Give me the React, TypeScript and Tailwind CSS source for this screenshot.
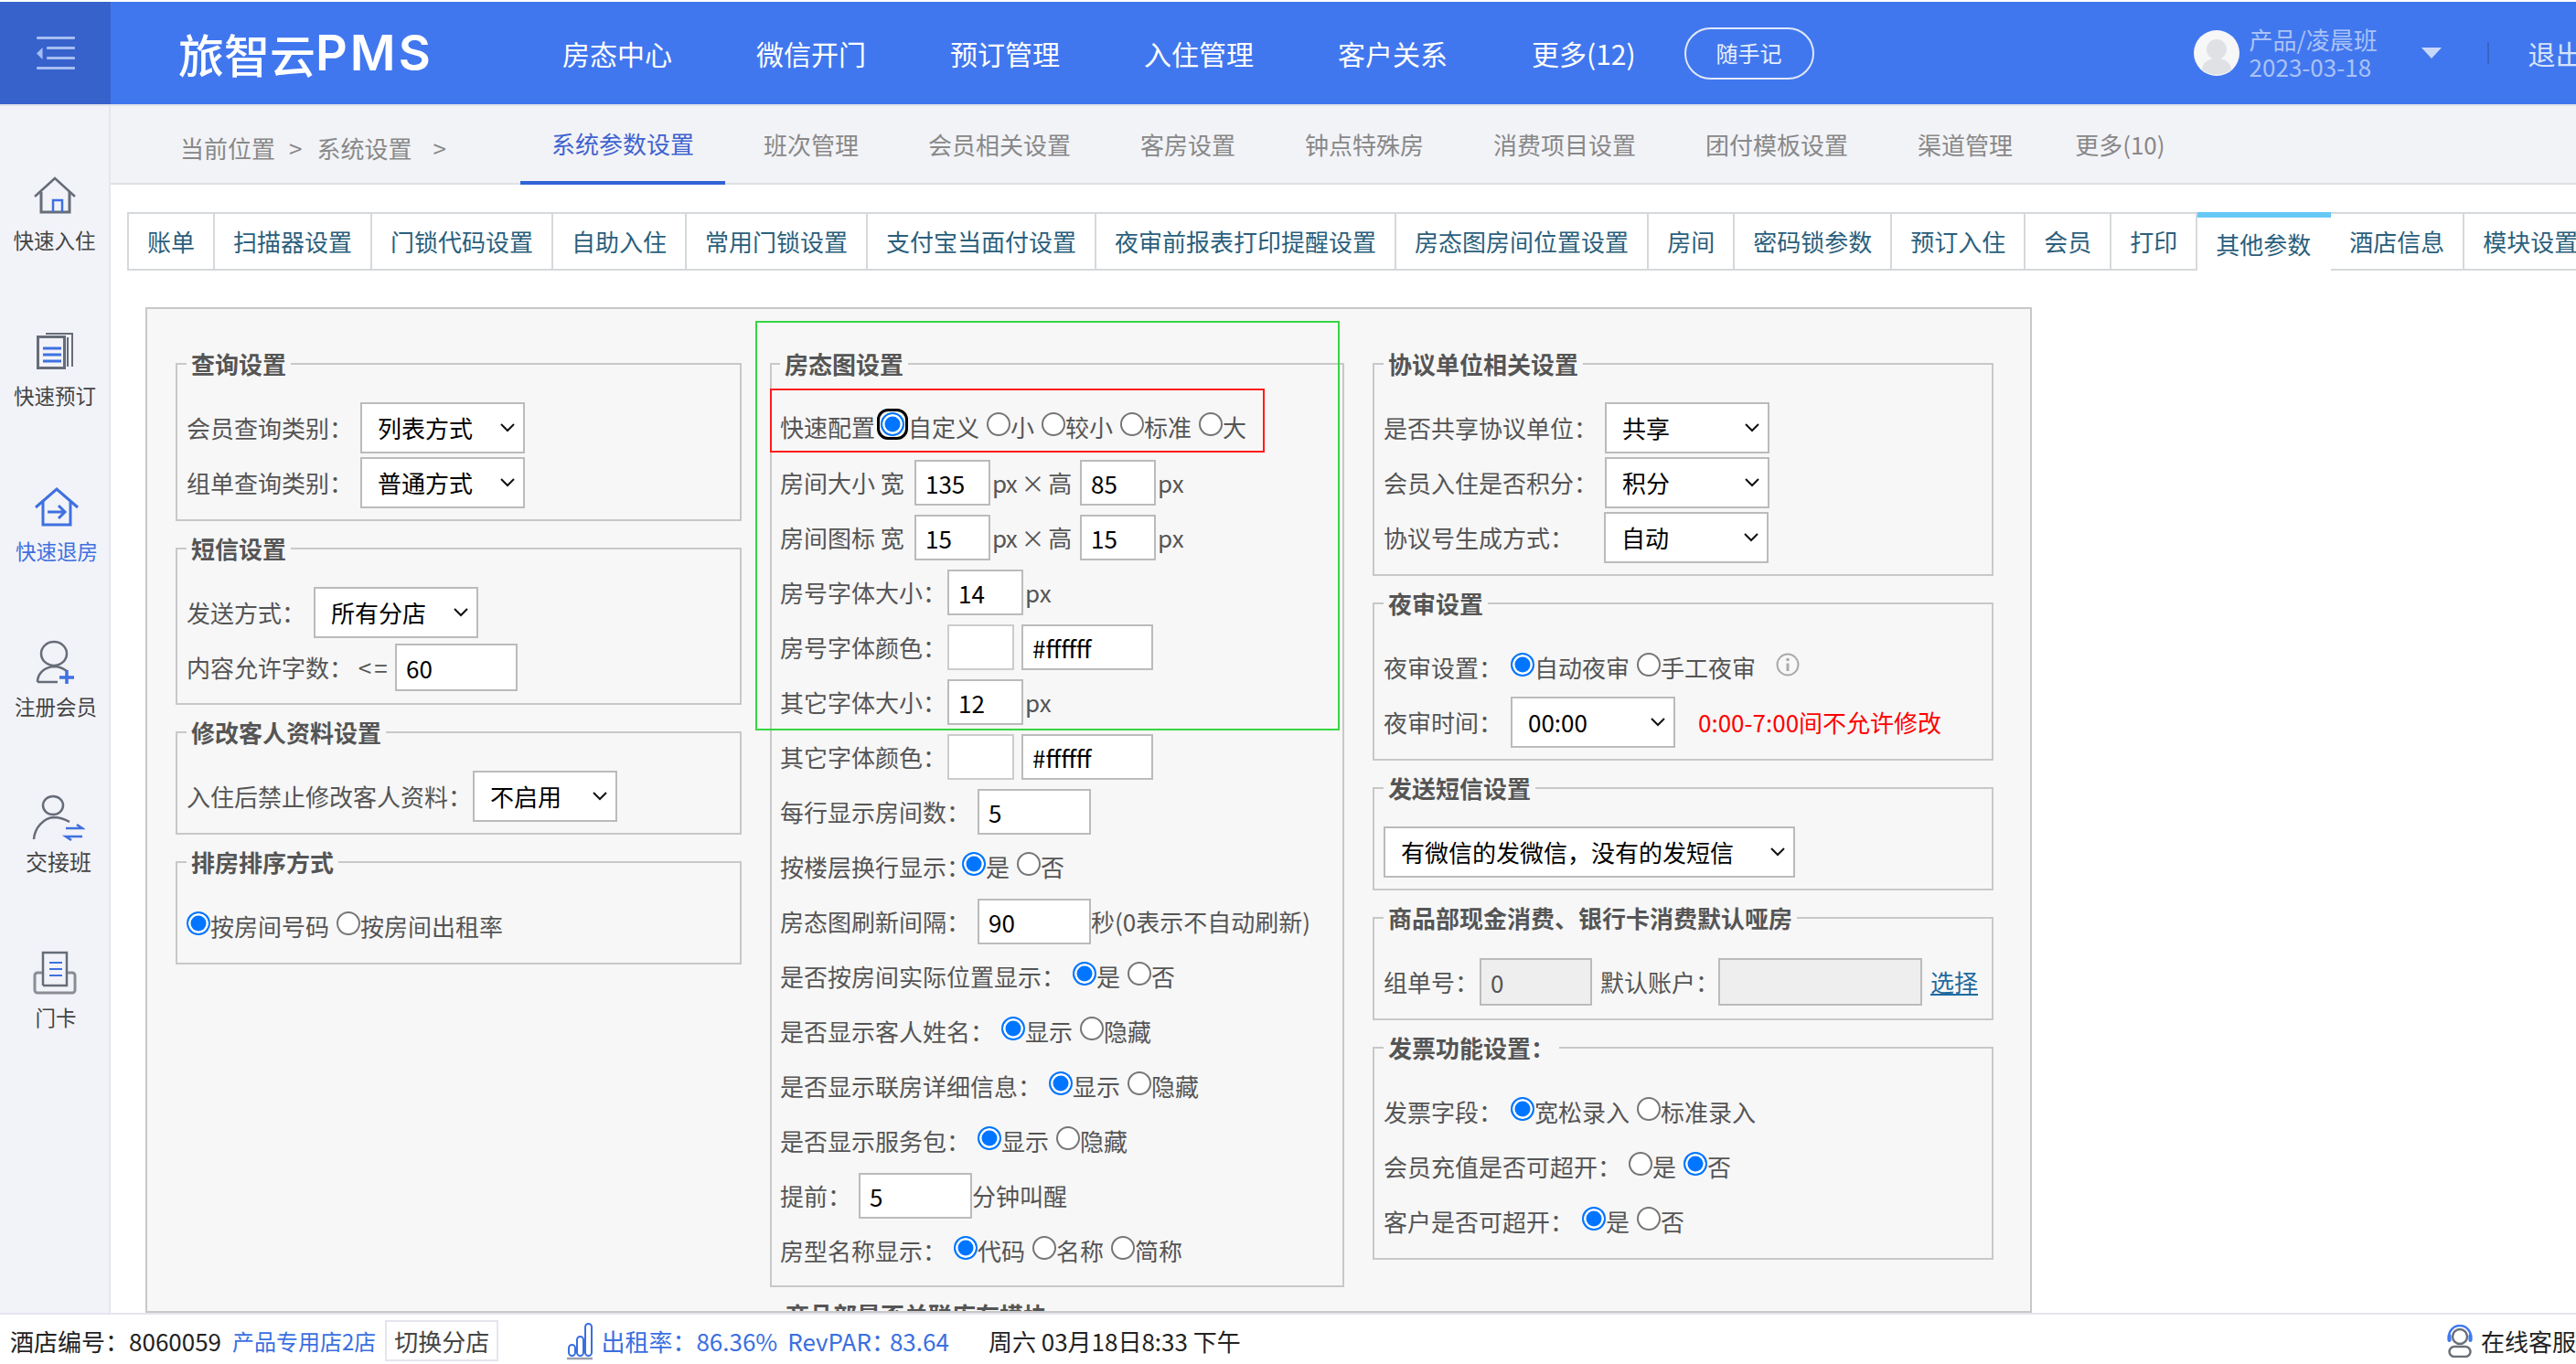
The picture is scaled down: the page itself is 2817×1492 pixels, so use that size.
import React from 'react';

const Label = ({ w, children }: { w: string; children: React.ReactNode }) => (
  <span className={`shrink-0 whitespace-nowrap text-[#555] ${w}`}>{children}</span>
);

const Chevron = () => (
  <svg className="absolute right-[11px] top-1/2 -translate-y-1/2" width="16" height="10" viewBox="0 0 16 10" fill="none">
    <path d="M1 1l7 7 7-7" stroke="#111" strokeWidth="2" />
  </svg>
);

const Sel = ({ value, w }: { value: string; w: string }) => (
  <div className={`relative h-[56px] shrink-0 ${w}`}>
    <select className="w-full h-full appearance-none border-2 border-[#bbb] bg-white text-black pl-[17px] rounded-none">
      <option>{value}</option>
    </select>
    <Chevron />
  </div>
);

const Inp = ({ value, w, h = 'h-[50px]' }: { value: string; w: string; h?: string }) => (
  <input readOnly defaultValue={value} className={`shrink-0 border-2 border-[#bbb] bg-white text-black pl-[10px] ${w} ${h}`} />
);

const radioCls = 'appearance-none w-[26px] h-[26px] shrink-0 rounded-full border-2 border-[#767676] bg-white checked:border-[#0075ff] checked:bg-[#0075ff] checked:shadow-[inset_0_0_0_2.5px_white]';

const Radio = ({ name, label, checked }: { name: string; label: string; checked?: boolean }) => (
  <label className="flex items-center shrink-0 whitespace-nowrap text-[#555]">
    <input type="radio" name={name} defaultChecked={checked} className={`${radioCls} -mt-[6px]`} />
    <span>{label}</span>
  </label>
);

const Field = ({ title, pb = 'pb-[12px]', pt = 'pt-[24px]', pl = 'pl-[10px]', children }: { title: string; pb?: string; pt?: string; pl?: string; children?: React.ReactNode }) => (
  <fieldset className={`border-2 border-[#c8c8c8] mb-[12px] ${pb} ${pl}`}>
    <legend className="px-[5px] font-bold text-[#555] leading-[36px] whitespace-nowrap">{title}</legend>
    <div className={pt}>{children}</div>
  </fieldset>
);

const Row = ({ h = 'h-[50px]', mb = 'mb-[10px]', children }: { h?: string; mb?: string; children: React.ReactNode }) => (
  <div className={`flex items-center ${h} ${mb}`}>{children}</div>
);

const RadioRow = ({ h = 'h-[50px]', mb = 'mb-[10px]', children }: { h?: string; mb?: string; children: React.ReactNode }) => (
  <div className={`flex items-center gap-x-[8px] ${h} ${mb}`}>{children}</div>
);

const topTabs = ['会员相关设置', '客房设置', '钟点特殊房', '消费项目设置', '团付模板设置', '渠道管理'];
const subTabs = ['账单', '扫描器设置', '门锁代码设置', '自助入住', '常用门锁设置', '支付宝当面付设置', '夜审前报表打印提醒设置', '房态图房间位置设置', '房间', '密码锁参数', '预订入住', '会员', '打印', '其他参数', '酒店信息', '模块设置'];
const navs = ['房态中心', '微信开门', '预订管理', '入住管理', '客户关系', '更多(12)'];

const HomeIcon = () => (
  <svg width="48" height="42" viewBox="0 0 48 42" fill="none">
    <path d="M2 22L24 2l22 20" stroke="#666c78" strokeWidth="2.5" />
    <path d="M9 17v22h31V17" stroke="#666c78" strokeWidth="3" />
    <path d="M22 39V26h10v13" stroke="#3f70e0" strokeWidth="2.5" />
  </svg>
);
const BookIcon = () => (
  <svg width="42" height="42" viewBox="0 0 42 42" fill="none">
    <rect x="2.5" y="5.5" width="29" height="34" stroke="#666c78" strokeWidth="3" />
    <path d="M11 2h29v36M35 6v32" stroke="#666c78" strokeWidth="2" />
    <path d="M8 18h20M8 25h20M8 32h20" stroke="#3f70e0" strokeWidth="3" />
  </svg>
);
const OutIcon = () => (
  <svg width="50" height="44" viewBox="0 0 50 44" fill="none">
    <path d="M2 23L25 3l23 20" stroke="#3f70e0" strokeWidth="3" />
    <path d="M10 17v25h30V17" stroke="#3f70e0" strokeWidth="3" />
    <path d="M15 28h19M27 21l7 7-7 7" stroke="#3f70e0" strokeWidth="3" />
  </svg>
);
const AddUserIcon = () => (
  <svg width="44" height="48" viewBox="0 0 44 48" fill="none">
    <ellipse cx="20" cy="15" rx="14" ry="13" stroke="#666c78" strokeWidth="2.5" />
    <path d="M2 46c0-8 6-16 18-17 6 0 10 2 14 5M2 46h22" stroke="#666c78" strokeWidth="2.5" />
    <path d="M26 41h16M34 33v16" stroke="#3f70e0" strokeWidth="3.5" />
  </svg>
);
const SwapIcon = () => (
  <svg width="58" height="52" viewBox="0 0 58 52" fill="none">
    <ellipse cx="23" cy="13" rx="11" ry="10" stroke="#666c78" strokeWidth="2.5" />
    <path d="M2 50c1-14 12-23 21-24 7 0 13 2 18 5" stroke="#666c78" strokeWidth="2.5" />
    <path d="M37 38h18l-6-4M55 47H37l6 4" stroke="#3f70e0" strokeWidth="2.5" />
  </svg>
);
const CardIcon = () => (
  <svg width="50" height="48" viewBox="0 0 50 48" fill="none">
    <path d="M11 38V2h26v36H11" stroke="#666c78" strokeWidth="2.5" />
    <path d="M18 13h14M18 20h14M18 27h14" stroke="#3f70e0" strokeWidth="2" />
    <path d="M10 24H5a3 3 0 00-3 3v16a3 3 0 003 3h38a3 3 0 003-3V27a3 3 0 00-3-3h-5" stroke="#8a8d94" strokeWidth="3" />
  </svg>
);

const sideItems = [
  { label: '快速入住', icon: <HomeIcon />, cls: 'pl-[0px] text-[22.5px] text-[#444]' },
  { label: '快速预订', icon: <BookIcon />, cls: 'pl-[1px] text-[22.5px] text-[#444]' },
  { label: '快速退房', icon: <OutIcon />, cls: 'pl-[5px] text-[22.5px] text-[#3f70e0]' },
  { label: '注册会员', icon: <AddUserIcon />, cls: 'pl-[3px] text-[22.5px] text-[#444]' },
  { label: '交接班', icon: <SwapIcon />, cls: 'pl-[9px] text-[24px] text-[#444]' },
  { label: '门卡', icon: <CardIcon />, cls: 'pl-[3px] text-[22.5px] text-[#444]' },
];

export default function App() {
  return (
    <div lang="zh-CN" className="w-[2817px] h-[1492px] overflow-hidden flex flex-col bg-white pt-[2px] text-[26px] leading-[36px] font-['Noto_Sans_CJK_SC','Noto_Sans',sans-serif]">
      {/* header */}
      <div className="h-[114px] shrink-0 border-b-2 border-[#e3e4e9] flex bg-[#4177ee] text-white">
        <div className="w-[121px] shrink-0 bg-[#3762cc] flex items-center justify-center">
          <svg width="42" height="36" viewBox="0 0 42 36" fill="#a6bdf2">
            <rect width="42" height="3" rx="1" />
            <rect x="11" y="11" width="31" height="3" rx="1" />
            <rect x="11" y="22" width="31" height="3" rx="1" />
            <rect y="33" width="42" height="3" rx="1" />
            <path d="M6.5 12v13L0 18.500z" />
          </svg>
        </div>
        <div className="w-[448px] pl-[74px] shrink-0 flex items-center text-[50px] font-medium whitespace-nowrap">
          <span>旅智云</span>
          <span className="font-['Inter',sans-serif] font-semibold text-[54px] tracking-[3px]">PMS</span>
        </div>
        {navs.map((n) => (
          <div key={n} className="px-[46px] flex items-center text-[30px] whitespace-nowrap shrink-0">{n}</div>
        ))}
        <div className="self-center shrink-0 ml-[7px] w-[142px] h-[57px] rounded-full border-2 border-[#dfe8fb] flex items-center justify-center text-[24px] text-[#e8effd]">随手记</div>
        <svg className="self-center shrink-0 ml-[415px]" width="50" height="50" viewBox="0 0 50 50">
          <circle cx="25" cy="25" r="25" fill="#f7f7f8" />
          <circle cx="25" cy="21" r="11" fill="#dfe1e5" />
          <path d="M9 43c1-9 8-12 16-12s15 3 16 12a25 25 0 01-32 0z" fill="#dfe1e5" />
        </svg>
        <div className="self-center shrink-0 ml-[11px] w-[188px] text-[#abc2f6] leading-[30px] -mt-[1px] whitespace-nowrap">
          <div>产品/凌晨班</div>
          <div>2023-03-18</div>
        </div>
        <svg className="self-center shrink-0" width="22" height="12" viewBox="0 0 22 12"><path d="M0 0h22L11 12z" fill="#c9d8fa" /></svg>
        <div className="self-center shrink-0 ml-[50px] w-[2px] h-[24px] bg-[#3a62c4]" />
        <div className="self-center shrink-0 ml-[43px] text-[30px] text-[#d8e3fb] whitespace-nowrap">退出</div>
      </div>

      <div className="flex-1 min-h-0 flex overflow-hidden">
        {/* sidebar */}
        <div className="w-[121px] shrink-0 bg-[#f2f3f8] border-r-2 border-[#e6e7ee] pt-[66px]">
          {sideItems.map((s) => (
            <div key={s.label} className={`h-[170px] flex flex-col items-center ${s.cls}`}>
              <div className="h-[64px] flex items-center justify-center">{s.icon}</div>
              <div className="leading-[32px] whitespace-nowrap">{s.label}</div>
            </div>
          ))}
        </div>

        <div className="flex-1 min-w-0 flex flex-col">
          {/* breadcrumb + top tabs */}
          <div className="h-[86px] shrink-0 bg-[#f2f3f7] border-b-2 border-[#e0e1e4] flex items-start whitespace-nowrap">
            <div className="w-[444px] shrink-0 h-[84px] pl-[76px] pt-[8px] flex items-center text-[#888]">
              <span>当前位置</span>
              <span className="ml-[15px]">&gt;</span>
              <span className="ml-[16px]">系统设置</span>
              <span className="ml-[23px]">&gt;</span>
            </div>
            <div className="h-[86px] px-[4px] shrink-0">
              <div className="h-full px-[34px] border-b-4 border-[#3163d6] flex items-center text-[#3f63cf]">系统参数设置</div>
            </div>
            <div className="h-[84px] px-[38px] shrink-0 flex items-center text-[#888]">班次管理</div>
            {topTabs.map((t) => (
              <div key={t} className="h-[84px] px-[38px] shrink-0 flex items-center text-[#888]">{t}</div>
            ))}
            <div className="h-[84px] -ml-[8px] px-[38px] shrink-0 flex items-center text-[#888]">更多(10)</div>
          </div>

          {/* sub tabs */}
          <div className="shrink-0 pt-[30px] pl-[18px] flex whitespace-nowrap text-[#2b5f7c]">
            <div className="flex shrink-0 border-l-2 border-[#d5d9dc]">
              {subTabs.map((t) =>
                t === '其他参数' ? (
                  <div key={t} className="h-[64px] shrink-0 px-[20px] pr-[22px] border-t-[6px] border-[#66c8f5] bg-white flex items-center">{t}</div>
                ) : (
                  <div key={t} className="h-[64px] shrink-0 px-[20px] border-t-2 border-b-2 border-r-2 border-[#d5d9dc] flex items-center">{t}</div>
                )
              )}
            </div>
          </div>

          {/* settings panel */}
          <div className="relative flex-1 min-h-0 ml-[38px] mt-[40px] w-[2063px] border-2 border-[#c8c8c8] bg-[#f7f7f7] overflow-hidden pt-[42px] pl-[31px] flex items-start">
            <div className="w-[619px] shrink-0">
              <Field title="查询设置">
                <Row h="h-[56px]" mb="mb-[4px]"><Label w="w-[190px]">会员查询类别：</Label><Sel value="列表方式" w="w-[180px]" /></Row>
                <Row h="h-[56px]" mb="mb-0"><Label w="w-[190px]">组单查询类别：</Label><Sel value="普通方式" w="w-[180px]" /></Row>
              </Field>
              <Field title="短信设置" pb="pb-[13px]">
                <Row h="h-[56px]" mb="mb-[6px]"><Label w="w-[139px]">发送方式：</Label><Sel value="所有分店" w="w-[180px]" /></Row>
                <Row h="h-[52px]" mb="mb-0"><Label w="w-[228px]">内容允许字数： <span className="tracking-[3px]">&lt;=</span></Label><Inp value="60" w="w-[134px]" h="h-[52px]" /></Row>
              </Field>
              <Field title="修改客人资料设置">
                <Row h="h-[56px]" mb="mb-0"><Label w="w-[313px]">入住后禁止修改客人资料：</Label><Sel value="不启用" w="w-[158px]" /></Row>
              </Field>
              <Field title="排房排序方式">
                <RadioRow h="h-[56px]" mb="mb-0">
                  <Radio name="sort" label="按房间号码" checked />
                  <Radio name="sort" label="按房间出租率" />
                </RadioRow>
              </Field>
            </div>

            <div className="w-[628px] shrink-0 ml-[31px]">
              <Field title="房态图设置" pt="pt-[9px]" pb="pb-[13px]" pl="pl-[9px]">
                <div className="-ml-[11px] mb-[8px] w-[541px] h-[70px] border-2 border-[#ff1a1a] pl-[9px] pt-[14px] flex items-center gap-x-[8px] whitespace-nowrap">
                  <div className="flex items-center">
                    <span className="text-[#555] mr-[2px]">快速配置</span>
                    <span className="w-[34px] h-[34px] -mt-[6px] shrink-0 rounded-[12px] border-[3px] border-black flex items-center justify-center">
                      <input type="radio" name="quick" defaultChecked className={radioCls} />
                    </span>
                    <span className="text-[#555]">自定义</span>
                  </div>
                  <Radio name="quick" label="小" />
                  <Radio name="quick" label="较小" />
                  <Radio name="quick" label="标准" />
                  <Radio name="quick" label="大" />
                </div>
                <Row><Label w="w-[147px]">房间大小 宽</Label><Inp value="135" w="w-[83px]" /><span className="ml-[2px] w-[96px] shrink-0 tracking-[-1px] text-[#555] whitespace-nowrap">px × 高</span><Inp value="85" w="w-[83px]" /><span className="ml-[2px] text-[#555]">px</span></Row>
                <Row><Label w="w-[147px]">房间图标 宽</Label><Inp value="15" w="w-[83px]" /><span className="ml-[2px] w-[96px] shrink-0 tracking-[-1px] text-[#555] whitespace-nowrap">px × 高</span><Inp value="15" w="w-[83px]" /><span className="ml-[2px] text-[#555]">px</span></Row>
                <Row><Label w="w-[183px]">房号字体大小：</Label><Inp value="14" w="w-[83px]" /><span className="ml-[2px] text-[#555]">px</span></Row>
                <Row><Label w="w-[183px]">房号字体颜色：</Label><div className="w-[73px] h-[50px] shrink-0 border-2 border-[#ccc] bg-white" /><div className="w-[8px] shrink-0" /><Inp value="#ffffff" w="w-[144px]" /></Row>
                <Row><Label w="w-[183px]">其它字体大小：</Label><Inp value="12" w="w-[83px]" /><span className="ml-[2px] text-[#555]">px</span></Row>
                <Row><Label w="w-[183px]">其它字体颜色：</Label><div className="w-[73px] h-[50px] shrink-0 border-2 border-[#ccc] bg-white" /><div className="w-[8px] shrink-0" /><Inp value="#ffffff" w="w-[144px]" /></Row>
                <Row><Label w="w-[216px]">每行显示房间数：</Label><Inp value="5" w="w-[124px]" /></Row>
                <RadioRow><Label w="w-[191px]">按楼层换行显示：</Label><Radio name="floor" label="是" checked /><Radio name="floor" label="否" /></RadioRow>
                <Row><Label w="w-[216px]">房态图刷新间隔：</Label><Inp value="90" w="w-[124px]" /><span className="text-[#555] whitespace-nowrap">秒(0表示不自动刷新)</span></Row>
                <RadioRow><Label w="w-[312px]">是否按房间实际位置显示：</Label><Radio name="pos" label="是" checked /><Radio name="pos" label="否" /></RadioRow>
                <RadioRow><Label w="w-[234px]">是否显示客人姓名：</Label><Radio name="guest" label="显示" checked /><Radio name="guest" label="隐藏" /></RadioRow>
                <RadioRow><Label w="w-[286px]">是否显示联房详细信息：</Label><Radio name="linked" label="显示" checked /><Radio name="linked" label="隐藏" /></RadioRow>
                <RadioRow><Label w="w-[208px]">是否显示服务包：</Label><Radio name="pkg" label="显示" checked /><Radio name="pkg" label="隐藏" /></RadioRow>
                <Row><Label w="w-[86px]">提前：</Label><Inp value="5" w="w-[124px]" /><span className="text-[#555] whitespace-nowrap">分钟叫醒</span></Row>
                <RadioRow mb="mb-0"><Label w="w-[182px]">房型名称显示：</Label><Radio name="type" label="代码" checked /><Radio name="type" label="名称" /><Radio name="type" label="简称" /></RadioRow>
              </Field>
              <Field title="商品部是否关联库存模块" />
            </div>

            <div className="w-[679px] shrink-0 ml-[31px]">
              <Field title="协议单位相关设置">
                <Row h="h-[56px]" mb="mb-[4px]"><Label w="w-[242px]">是否共享协议单位：</Label><Sel value="共享" w="w-[180px]" /></Row>
                <Row h="h-[56px]" mb="mb-[4px]"><Label w="w-[242px]">会员入住是否积分：</Label><Sel value="积分" w="w-[180px]" /></Row>
                <Row h="h-[56px]" mb="mb-0"><Label w="w-[241px]">协议号生成方式：</Label><Sel value="自动" w="w-[180px]" /></Row>
              </Field>
              <Field title="夜审设置">
                <RadioRow h="h-[56px]" mb="mb-[4px]">
                  <Label w="w-[131px]">夜审设置：</Label>
                  <Radio name="audit" label="自动夜审" checked />
                  <Radio name="audit" label="手工夜审" />
                  <svg className="ml-[14px] -mt-[6px] shrink-0" width="26" height="26" viewBox="0 0 26 26" fill="none">
                    <circle cx="13" cy="13" r="11.500" stroke="#aaa" strokeWidth="2" />
                    <circle cx="13" cy="7.500" r="1.800" fill="#aaa" />
                    <path d="M13 11.500v8.500" stroke="#aaa" strokeWidth="3" />
                  </svg>
                </RadioRow>
                <Row h="h-[56px]" mb="mb-0">
                  <Label w="w-[139px]">夜审时间：</Label>
                  <Sel value="00:00" w="w-[180px]" />
                  <span className="ml-[25px] text-[#ff0000] whitespace-nowrap">0:00-7:00间不允许修改</span>
                </Row>
              </Field>
              <Field title="发送短信设置">
                <Row h="h-[56px]" mb="mb-0"><Sel value="有微信的发微信，没有的发短信" w="w-[450px]" /></Row>
              </Field>
              <Field title="商品部现金消费、银行卡消费默认哑房">
                <Row h="h-[56px]" mb="mb-0">
                  <Label w="w-[105px]">组单号：</Label>
                  <input readOnly defaultValue="0" className="w-[123px] h-[52px] shrink-0 border-2 border-[#bbb] bg-[#eee] text-[#555] pl-[10px]" />
                  <span className="ml-[9px] w-[129px] shrink-0 text-[#555] whitespace-nowrap">默认账户：</span>
                  <input readOnly className="w-[223px] h-[52px] shrink-0 border-2 border-[#bbb] bg-[#eee]" />
                  <a className="ml-[9px] text-[#1f6aa0] underline whitespace-nowrap">选择</a>
                </Row>
              </Field>
              <Field title="发票功能设置：">
                <RadioRow h="h-[56px]" mb="mb-[4px]"><Label w="w-[131px]">发票字段：</Label><Radio name="inv" label="宽松录入" checked /><Radio name="inv" label="标准录入" /></RadioRow>
                <RadioRow h="h-[56px]" mb="mb-[4px]"><Label w="w-[260px]">会员充值是否可超开：</Label><Radio name="over" label="是" /><Radio name="over" label="否" checked /></RadioRow>
                <RadioRow h="h-[56px]" mb="mb-0"><Label w="w-[209px]">客户是否可超开：</Label><Radio name="cust" label="是" checked /><Radio name="cust" label="否" /></RadioRow>
              </Field>
            </div>

            {/* annotation rectangle drawn over the form */}
            <div className="absolute left-[665px] top-[13px] w-[639px] h-[448px] border-2 border-[#36d643] pointer-events-none" />
          </div>
        </div>
      </div>

      {/* footer */}
      <div className="relative z-10 h-[56px] shrink-0 border-t-2 border-[#e5e5ef] bg-white pt-[6px] pb-[3px] pl-[11px] flex items-center whitespace-nowrap text-[#222]">
        <span>酒店编号：</span>
        <span className="ml-[0px]">8060059</span>
        <span className="ml-[12px] text-[24px] text-[#3a6fe0]">产品专用店2店</span>
        <span className="ml-[10px] h-[45px] px-[8px] border-2 border-[#e5e5ef] flex items-center text-[#444]">切换分店</span>
        <svg className="ml-[74px] shrink-0" width="30" height="42" viewBox="0 0 30 42" fill="none">
          <rect x="3" y="25" width="7" height="12" rx="3.500" stroke="#3a6fe0" strokeWidth="2" />
          <rect x="12" y="16" width="7" height="21" rx="3.500" stroke="#3a6fe0" strokeWidth="2" />
          <rect x="21" y="2" width="7" height="35" rx="3.500" stroke="#3a6fe0" strokeWidth="2" />
          <path d="M1 40h28" stroke="#9aa0ac" strokeWidth="2.500" />
        </svg>
        <span className="ml-[8px] text-[#3a6fe0]">出租率：</span>
        <span className="text-[#3a6fe0]">86.36%</span>
        <span className="ml-[11px] text-[#3a6fe0]">RevPAR：</span>
        <span className="-ml-[6px] text-[#3a6fe0]">83.64</span>
        <span className="ml-[43px]">周六 03月18日8:33 下午</span>
        <svg className="ml-auto shrink-0" width="30" height="36" viewBox="0 0 30 36" fill="none">
          <circle cx="15" cy="13" r="8" stroke="#6b6f76" strokeWidth="2.500" />
          <path d="M3 17v-4a12 12 0 0124 0v4" stroke="#3f78f0" strokeWidth="2.500" />
          <rect x="1.500" y="10" width="4" height="9" rx="2" fill="#3f78f0" />
          <rect x="24.500" y="10" width="4" height="9" rx="2" fill="#3f78f0" />
          <rect x="3.500" y="24" width="23" height="11" rx="5.500" stroke="#6b6f76" strokeWidth="2.500" />
        </svg>
        <span className="ml-[8px]">在线客服</span>
      </div>
    </div>
  );
}
